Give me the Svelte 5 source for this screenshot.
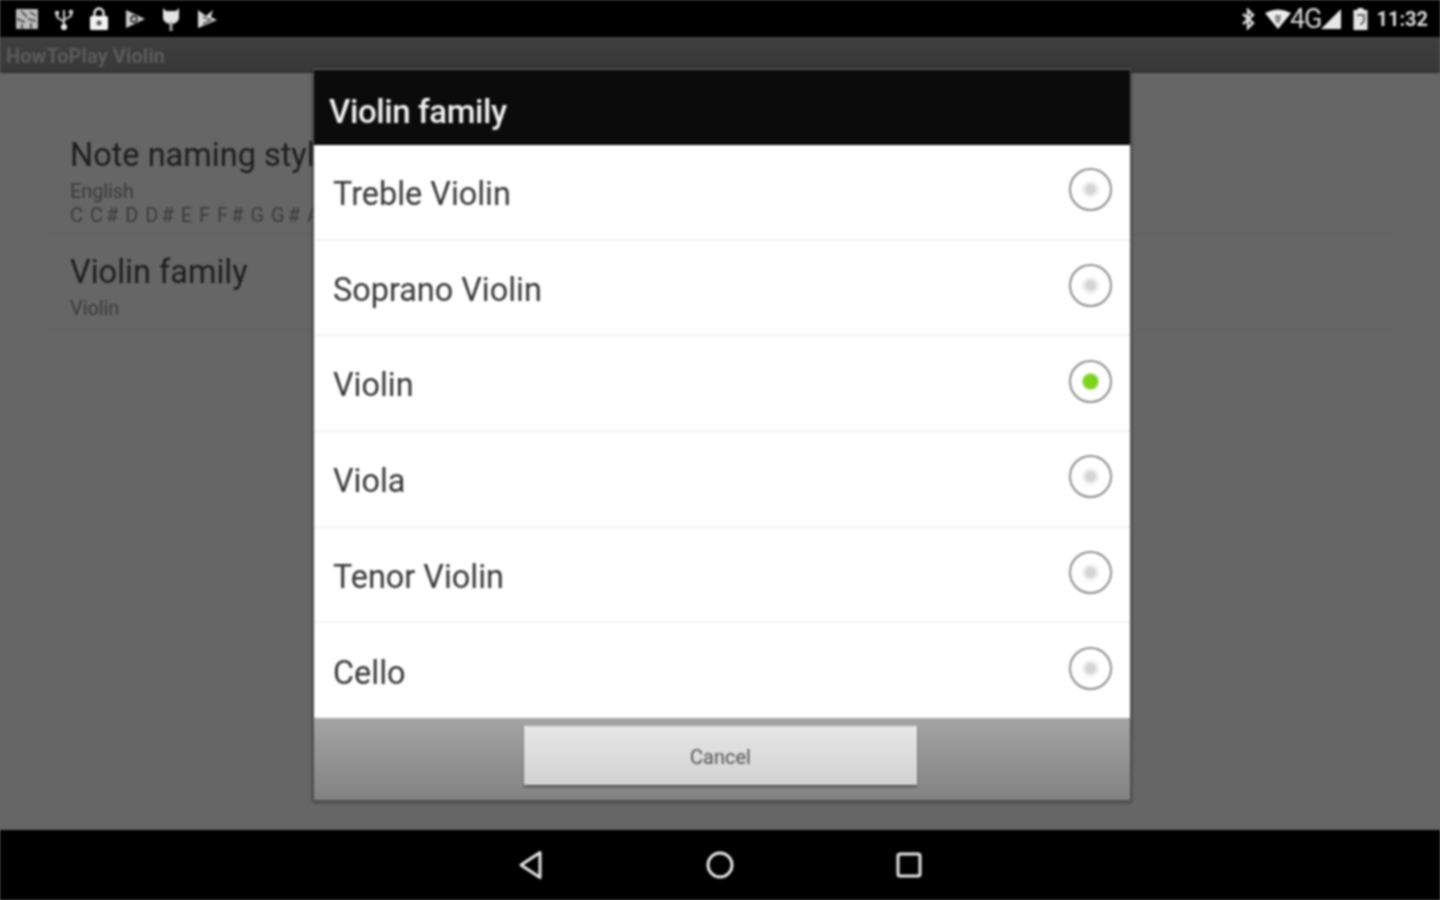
<script>
  const families = ['Treble Violin', 'Soprano Violin', 'Violin', 'Viola', 'Tenor Violin', 'Cello'];
  let selected = $state('Violin');
</script>

<div class="screen">
  <header class="status">
    <div class="icons-left">
      <svg width="22" height="24" viewBox="0 0 22 24"><rect x="0" y="2" width="22" height="20" rx="1" fill="#bdbdbd"/><path d="M5 4l6 6M14 5l6 4M1 12l8 3M12 12l8 2M6 17v5M15 16v6" stroke="#5a5a5a" stroke-width="2"/></svg>
      <svg width="18" height="24" viewBox="0 0 18 24"><path d="M9 3v16M2 7v3l7 5M16 6v3l-7 4" fill="none" stroke="#ccc" stroke-width="2"/><circle cx="9" cy="20" r="3" fill="#eee"/><rect x="0" y="4" width="4" height="4" fill="#ccc"/><rect x="14" y="3" width="4" height="4" fill="#ccc"/></svg>
      <svg width="18" height="25" viewBox="0 0 18 25"><path d="M4.500 11V7a4.500 4.500 0 0 1 9 0v4" fill="none" stroke="#eee" stroke-width="2.400"/><rect x="0" y="10" width="18" height="14" rx="1.500" fill="#f2f2f2"/><circle cx="9" cy="17" r="2.500" fill="#555"/></svg>
      <svg width="20" height="22" viewBox="0 0 20 22"><path d="M1 2l19 9-19 9z" fill="#c8c8c8"/><circle cx="9" cy="11" r="3" fill="none" stroke="#333" stroke-width="1.800"/></svg>
      <svg width="18" height="26" viewBox="0 0 18 26"><path d="M1 2l3 3h10l3-3v10a8 6 0 0 1-16 0z" fill="#e4e4e4"/><rect x="7.500" y="16" width="3" height="9" fill="#aaa"/></svg>
      <svg width="20" height="22" viewBox="0 0 20 22"><path d="M1 2l8 6 7-6-2 7 6 3L1 20z" fill="#d8d8d8"/><path d="M6 9l8 3-8 4" stroke="#555" stroke-width="1.500" fill="none"/></svg>
    </div>
    <div class="icons-right">
      <svg class="bt" width="14" height="22" viewBox="0 0 14 22"><path d="M2 6l10 9-5 5V2l5 5-10 9" fill="none" stroke="#ddd" stroke-width="2.400"/></svg>
      <svg class="wifi" width="26" height="20" viewBox="0 0 26 20"><path d="M0 4Q13-3 26 4L13 20z" fill="#eee"/><path d="M10 6h6l-.5 6-2.500 3-2.500-3z" fill="#8a8a8a"/></svg>
      <span class="net">4G</span>
      <svg class="signal" width="21" height="20" viewBox="0 0 21 20"><path d="M20 0v20H0z" fill="#e6e6e6"/></svg>
      <svg class="battery" width="15" height="24" viewBox="0 0 15 24"><path d="M4.500 1h6v2h4v20H.5V3h4z" fill="#e6e6e6"/><path d="M4 8h7v6l-3.500 4" fill="none" stroke="#444" stroke-width="1.500"/></svg>
      <span class="clock">11:32</span>
    </div>
  </header>

  <div class="actionbar">HowToPlay Violin</div>

  <main class="prefs">
    <section class="pref">
      <h2>Note naming style</h2>
      <p>English</p>
      <p class="notes">C C# D D# E F F# G G# A A# B</p>
    </section>
    <section class="pref">
      <h2>Violin family</h2>
      <p>Violin</p>
    </section>
  </main>

  <nav class="navbar">
    <svg width="26" height="30" viewBox="0 0 26 30"><path d="M22 2.500v25L3 15z" fill="none" stroke="#e6e6e6" stroke-width="3" stroke-linejoin="round"/></svg>
    <svg width="30" height="30" viewBox="0 0 30 30"><circle cx="15" cy="15" r="12" fill="none" stroke="#e6e6e6" stroke-width="3"/></svg>
    <svg width="26" height="26" viewBox="0 0 26 26"><rect x="2" y="2" width="22" height="22" rx="2" fill="none" stroke="#e6e6e6" stroke-width="3"/></svg>
  </nav>

  <div class="dialog" role="dialog" aria-label="Violin family">
    <div class="title">Violin family</div>
    <ul class="options">
      {#each families as f (f)}
        <li class="option">
          <span>{f}</span>
          <button class="radio" class:on={selected === f} aria-label={f} onclick={() => (selected = f)}></button>
        </li>
      {/each}
    </ul>
    <div class="footer">
      <button class="cancel">Cancel</button>
    </div>
  </div>
</div>

<style>
  :global(body) {
    background: #666;
  }
  .screen {
    position: relative;
    width: 1440px;
    height: 900px;
    display: flex;
    flex-direction: column;
    overflow: hidden;
    background: #666;
    font-family: Roboto, "Liberation Sans", sans-serif;
    filter: blur(0.8px);
  }
  .status {
    height: 37px;
    flex: none;
    background: #000;
    display: flex;
    align-items: center;
    justify-content: space-between;
    padding: 0 12px 0 16px;
    color: #ddd;
  }
  .icons-left {
    display: flex;
    align-items: center;
    gap: 17px;
  }
  .icons-right {
    display: flex;
    align-items: center;
  }
  .bt { margin-right: 10px; }
  .net {
    font-size: 27px;
    letter-spacing: -1px;
    color: #d8d8d8;
    margin-left: -1px;
  }
  .signal { margin-left: 0; margin-right: 11px; }
  .battery { margin-right: 8px; }
  .clock {
    font-size: 20px;
    font-weight: 700;
    color: #ddd;
  }
  .actionbar {
    height: 36px;
    flex: none;
    background: linear-gradient(#3f3f3f, #383838);
    border-bottom: 1px solid #2e2e2e;
    box-sizing: border-box;
    display: flex;
    align-items: center;
    padding: 2px 0 0 6px;
    font-size: 20px;
    font-weight: 700;
    letter-spacing: 0.1px;
    color: #5c5c5c;
  }
  .prefs {
    flex: 1;
    padding: 45px 48px 0;
    background: #666;
  }
  .pref {
    height: 96px;
    box-sizing: border-box;
    padding: 17px 22px 0;
    border-bottom: 1px solid #606060;
  }
  .pref:first-child {
    height: 117px;
  }
  .pref h2 {
    margin: 0 0 4px;
    font-size: 32.500px;
    line-height: 40px;
    font-weight: 400;
    color: #1c1c1c;
  }
  .pref p {
    margin: 0;
    font-size: 20px;
    line-height: 24px;
    letter-spacing: -0.1px;
    color: #3a3a3a;
  }
  .pref .notes {
    letter-spacing: 3px;
    word-spacing: -4px;
    white-space: nowrap;
  }
  .navbar {
    height: 70px;
    flex: none;
    background: #000;
    display: flex;
    align-items: center;
    justify-content: center;
    gap: 161px;
  }
  .dialog {
    position: absolute;
    left: 313px;
    top: 68px;
    width: 818px;
    height: 734px;
    box-sizing: border-box;
    border: 1px solid #505050;
    border-top: 2px solid #555;
    border-bottom: 2px solid #505050;
    box-shadow: 0 0 3px rgba(0, 0, 0, 0.6);
    display: flex;
    flex-direction: column;
  }
  .title {
    height: 75px;
    flex: none;
    background: #0b0b0b;
    color: #f0f0f0;
    font-size: 33px;
    font-weight: 500;
    letter-spacing: -0.4px;
    display: flex;
    align-items: center;
    padding: 8px 0 0 15px;
    box-sizing: border-box;
  }
  .options {
    list-style: none;
    margin: 0;
    padding: 0;
    background: #fff;
    height: 573px;
    flex: none;
  }
  .option {
    height: 95.700px;
    box-sizing: border-box;
    display: flex;
    align-items: center;
    justify-content: space-between;
    padding: 0 18px 0 19px;
    border-bottom: 2px solid #f3f3f3;
    font-size: 32.400px;
    color: #363636;
  }
  .option:last-child {
    height: 94.500px;
    border-bottom: 0;
  }
  .option span {
    position: relative;
    top: 2px;
  }
  .radio {
    width: 43px;
    height: 43px;
    flex: none;
    padding: 0;
    border-radius: 50%;
    border: 2px solid #8c8c8c;
    background: radial-gradient(circle, #d4d4d4 0 4px, #f0f0f0 7px, #fff 10px);
    position: relative;
    top: -2px;
  }
  .radio.on {
    background: radial-gradient(circle, #7ed321 0 7px, #fff 9px);
  }
  .footer {
    flex: 1;
    background: linear-gradient(#a4a4a4, #828282);
    display: flex;
    justify-content: center;
    align-items: flex-start;
    padding: 8px 3px 0 0;
  }
  .cancel {
    width: 393px;
    height: 59px;
    border: 0;
    padding: 2px 0 0;
    background: linear-gradient(#e6e6e6, #d2d2d2);
    box-shadow: 0 2px 2px rgba(0, 0, 0, 0.45);
    font-family: inherit;
    font-size: 20px;
    color: #555;
  }
</style>
